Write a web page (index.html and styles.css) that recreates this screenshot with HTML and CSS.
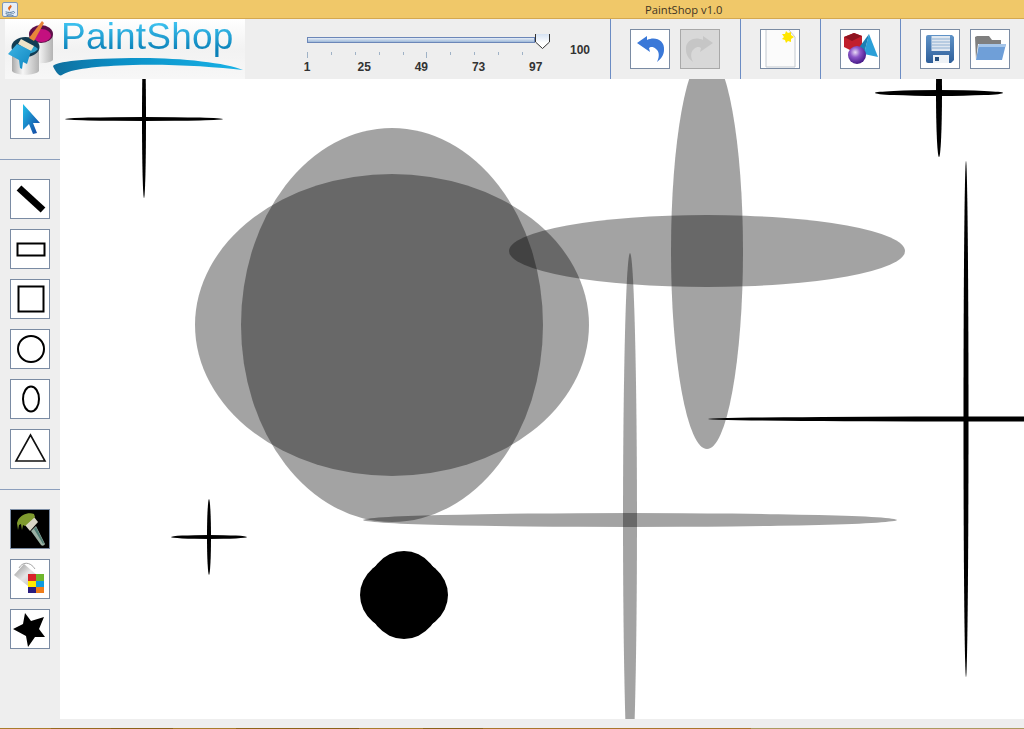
FILE: index.html
```html
<!DOCTYPE html>
<html lang="en">
<head>
  <meta charset="UTF-8">
  <meta name="viewport" content="width=device-width, initial-scale=1.0">
  <title>PaintShop v1.0</title>
  <link rel="stylesheet" href="styles.css">
</head>
<body>
  <header class="titlebar">
    <span class="app-icon">
      <svg width="16" height="15" viewBox="0 0 16 15">
        <path d="M9 1C7 3 5 4 6 6l2 2C7 6 9 5 10 3z" fill="#e0641e"/>
        <path d="M3 9c3 1 6 1 8 0M3 11c3 1 6 1 8 0M4 13c2 1 6 1 8 0M11 9c2-1 3 1 1 2" fill="none" stroke="#3f6a94" stroke-width="1"/>
      </svg>
    </span>
    <span class="title-text">PaintShop v1.0</span>
  </header>

  <div class="toolbar">
    <div class="logo">
      <svg class="logo-can" width="56" height="60" viewBox="0 0 56 60">
        <defs>
          <linearGradient id="canSide" x1="0" x2="1" y1="0" y2="0">
            <stop offset="0" stop-color="#a9a9a9"/>
            <stop offset=".4" stop-color="#f6f6f6"/>
            <stop offset="1" stop-color="#b3b3b3"/>
          </linearGradient>
          <linearGradient id="bristle" x1="0" x2="1" y1="0" y2="1">
            <stop offset="0" stop-color="#3fb4e4"/>
            <stop offset="1" stop-color="#0f86c0"/>
          </linearGradient>
        </defs>
        <path d="M24 15h24v26c-3 4-20 4-24 2z" fill="url(#canSide)"/>
        <ellipse cx="36" cy="15" rx="12" ry="9" fill="#5f0f4a"/>
        <ellipse cx="36.500" cy="16.500" rx="9.500" ry="6.500" fill="#c4107f"/>
        <path d="M7 28h27v24c-4 5-23 5-27 0z" fill="url(#canSide)"/>
        <ellipse cx="20.500" cy="28" rx="14" ry="10" fill="#123c52"/>
        <path d="M9 30c6-6 19-6 24 0-4 6-20 7-24 0z" fill="#2e9fc8"/>
        <path d="M37 2l2 2-10 18-5-3z" fill="#e8853a"/>
        <path d="M16 20l13 7-3 5-13-7z" fill="#efe3c8"/>
        <path d="M12 25l14 7-4 13-4-2-1 7-2-1-1-8-11-6z" fill="url(#bristle)"/>
      </svg>
      <div class="logo-mark">
        <span class="logo-text">PaintShop</span>
        <svg class="logo-swoosh" width="192" height="20" viewBox="0 0 192 20">
          <defs>
            <linearGradient id="swoosh" x1="0" x2="1" y1="0" y2="0">
              <stop offset="0" stop-color="#0f6f9e"/>
              <stop offset=".35" stop-color="#0b8fc6"/>
              <stop offset="1" stop-color="#18b2e6"/>
            </linearGradient>
          </defs>
          <path d="M1 9C4 5 30 1 90 1c40 0 85 5 101 12-28-3-70-6-110-5C45 9 18 12 10 18 7 20 3 14 1 9z" fill="url(#swoosh)"/>
        </svg>
      </div>
    </div>

    <div class="slider-box">
      <div class="slider">
        <div class="slider-track"></div>
        <svg class="slider-thumb" width="15" height="15" viewBox="0 0 15 15">
          <defs>
            <linearGradient id="thumb" x1="0" x2="0" y1="0" y2="1">
              <stop offset="0" stop-color="#d5e2f3"/>
              <stop offset=".6" stop-color="#ffffff"/>
            </linearGradient>
          </defs>
          <path d="M.5 0v8l7 6.500 7-6.500V0" fill="url(#thumb)" stroke="#333" stroke-width="1"/>
        </svg>
      </div>
      <div class="ticks">
        <i class="tick long"></i><i class="tick"></i><i class="tick"></i><i class="tick"></i><i class="tick"></i>
        <i class="tick long"></i><i class="tick"></i><i class="tick"></i><i class="tick"></i><i class="tick"></i>
      </div>
      <div class="tick-labels">
        <span>1</span><span>25</span><span>49</span><span>73</span><span>97</span>
      </div>
    </div>
    <span class="slider-value">100</span>

    <div class="tool-group">
      <button class="tool">
        <svg width="38" height="38" viewBox="0 0 38 38">
          <path d="M6 13l10-7v4c8-4 18 0 17 10 0 5-3 9-7 12 3-6 2-11-1-13-3-3-6-2-7-1l1 4z" fill="#3a78d8"/>
        </svg>
      </button>
      <button class="tool disabled">
        <svg width="38" height="38" viewBox="0 0 38 38">
          <path d="M32 13l-10-7v4c-8-4-18 0-17 10 0 5 3 9 7 12-3-6-2-11 1-13 3-3 6-2 7-1l-1 4z" fill="#c6c6c6"/>
        </svg>
      </button>
    </div>
    <div class="tool-group">
      <button class="tool">
        <svg width="38" height="38" viewBox="0 0 38 38">
          <path d="M5 0h29v37H5z" fill="#fbfbfb"/>
          <path d="M5 0v37h29V7l-6-7" fill="none" stroke="#c2c8cf" stroke-width="1"/>
          <path d="M25 1l2 2 3-1 0 3 3 2-3 2 0 3-3-1-2 2-1-3-3-1 2-2-2-3 3 0z" fill="#ffe600"/>
        </svg>
      </button>
    </div>
    <div class="tool-group">
      <button class="tool">
        <svg width="38" height="38" viewBox="0 0 38 38">
          <defs>
            <radialGradient id="ball" cx=".4" cy=".35" r=".7">
              <stop offset="0" stop-color="#e9dcf5"/>
              <stop offset=".4" stop-color="#8d57c9"/>
              <stop offset="1" stop-color="#3c1180"/>
            </radialGradient>
          </defs>
          <path d="M3 7l10-4 8 3v12l-10 3-8-4z" fill="#c21f2c"/>
          <path d="M3 7l8 4 10-5-8-3z" fill="#8f1420"/>
          <path d="M28 4l9 23-14-3z" fill="#2a9fd8"/>
          <path d="M28 4l-5 20-6-5z" fill="#1b7fb4"/>
          <circle cx="16" cy="25" r="9" fill="url(#ball)"/>
        </svg>
      </button>
    </div>
    <div class="tool-group">
      <button class="tool">
        <svg width="38" height="38" viewBox="0 0 38 38">
          <defs>
            <linearGradient id="disk" x1="0" x2="0" y1="0" y2="1">
              <stop offset="0" stop-color="#5f93c8"/>
              <stop offset="1" stop-color="#2f5f9a"/>
            </linearGradient>
          </defs>
          <path d="M7 5h24l2 2v23l-3 3H7a2 2 0 01-2-2V7a2 2 0 012-2z" fill="url(#disk)"/>
          <path d="M10.500 6h18.500v15H10.500z" fill="#dfe7f0"/>
          <path d="M11 9h18M11 12h18M11 15h18M11 18h18" stroke="#8fb0d2" stroke-width="1"/>
          <path d="M12 25h16v8H12z" fill="#eef2f6"/>
          <path d="M14 27h4v4h-4z" fill="#27507f"/>
        </svg>
      </button>
      <button class="tool">
        <svg width="38" height="38" viewBox="0 0 38 38">
          <path d="M4 7l2-1h12l3 4h9v4H7l-2 16z" fill="#7f7f7f"/>
          <path d="M8 14h27l-4 16H5z" fill="#6f9fd8"/>
          <path d="M8 14h27l-1 3H7z" fill="#a6c6ea"/>
        </svg>
      </button>
    </div>
  </div>

  <div class="workspace">
    <aside class="sidebar">
      <div class="side-group top">
        <button class="tool">
          <svg width="38" height="38" viewBox="0 0 38 38">
            <defs>
              <linearGradient id="arrow" x1="0" x2="1" y1="0" y2="1">
                <stop offset="0" stop-color="#22c0ea"/>
                <stop offset="1" stop-color="#123f9e"/>
              </linearGradient>
            </defs>
            <path d="M12 4l17 19h-7l4 10-4 1-4-10-6 6z" fill="url(#arrow)"/>
          </svg>
        </button>
      </div>
      <div class="side-group">
        <button class="tool">
          <svg width="38" height="38" viewBox="0 0 38 38">
            <path d="M8 8l24 22" stroke="#000" stroke-width="7"/>
          </svg>
        </button>
        <button class="tool">
          <svg width="38" height="38" viewBox="0 0 38 38">
            <rect x="6.500" y="13.500" width="27" height="12" fill="none" stroke="#000" stroke-width="2"/>
          </svg>
        </button>
        <button class="tool">
          <svg width="38" height="38" viewBox="0 0 38 38">
            <rect x="7.500" y="6.500" width="25" height="25" fill="none" stroke="#000" stroke-width="2"/>
          </svg>
        </button>
        <button class="tool">
          <svg width="38" height="38" viewBox="0 0 38 38">
            <circle cx="20" cy="19" r="13" fill="none" stroke="#000" stroke-width="2"/>
          </svg>
        </button>
        <button class="tool">
          <svg width="38" height="38" viewBox="0 0 38 38">
            <ellipse cx="20" cy="19" rx="8" ry="12.500" fill="none" stroke="#000" stroke-width="2"/>
          </svg>
        </button>
        <button class="tool">
          <svg width="38" height="38" viewBox="0 0 38 38">
            <path d="M19.500 5L34 31H5z" fill="none" stroke="#111" stroke-width="1.600"/>
          </svg>
        </button>
      </div>
      <div class="side-group last">
        <button class="tool dark">
          <svg width="38" height="38" viewBox="0 0 38 38">
            <path d="M20 21l5-5 9 18c-1 2-3 2-4 1z" fill="#9ab0a4"/>
            <path d="M23 19l2-2 8 16-1 1z" fill="#4f7d74"/>
            <path d="M14 15l9-8 4 5-8 9z" fill="#d9d6c6"/>
            <path d="M7 10c3-5 10-8 16-6l1 3-10 9-2-1-1 5-1-6-2 1-1 5-1-7z" fill="#7f9a2e"/>
          </svg>
        </button>
        <button class="tool">
          <svg width="38" height="38" viewBox="0 0 38 38">
            <defs>
              <linearGradient id="pail" x1="0" x2="1" y1="0" y2="1">
                <stop offset="0" stop-color="#8f8f8f"/>
                <stop offset=".5" stop-color="#e6e6e6"/>
                <stop offset="1" stop-color="#b8b8b8"/>
              </linearGradient>
            </defs>
            <path d="M3 15L13 4l14 12-10 10z" fill="url(#pail)"/>
            <path d="M8 8c3-6 11-7 16 1" fill="none" stroke="#a8a8a8" stroke-width="1"/>
            <rect x="17" y="14" width="8" height="7" fill="#d8232a"/>
            <rect x="25" y="14" width="8" height="7" fill="#6fb62c"/>
            <rect x="17" y="21" width="8" height="6" fill="#ffe800"/>
            <rect x="25" y="21" width="8" height="6" fill="#0d9be0"/>
            <rect x="17" y="27" width="8" height="6" fill="#2a1c7e"/>
            <rect x="25" y="27" width="8" height="6" fill="#ee7d1a"/>
          </svg>
        </button>
        <button class="tool">
          <svg width="38" height="38" viewBox="0 0 38 38">
            <path d="M14 3l6 8 13-4-5 12 6 8H24l-7 10-2-11-13-7 10-5z" fill="#000"/>
          </svg>
        </button>
      </div>
    </aside>

    <main class="canvas">
      <svg class="drawing" width="964" height="640" viewBox="60 79 964 640">
        <g fill="#000">
          <ellipse cx="144" cy="119" rx="79" ry="2"/>
          <ellipse cx="144" cy="119" rx="2" ry="79"/>
          <ellipse cx="939" cy="93" rx="64" ry="3"/>
          <ellipse cx="939" cy="93" rx="3" ry="64"/>
          <ellipse cx="966" cy="419" rx="258" ry="2.500"/>
          <ellipse cx="966" cy="419" rx="2.500" ry="258"/>
          <ellipse cx="209" cy="537" rx="38" ry="2"/>
          <ellipse cx="209" cy="537" rx="2" ry="38"/>
          <ellipse cx="404" cy="595" rx="44" ry="38"/>
          <ellipse cx="404" cy="595" rx="38" ry="44"/>
        </g>
        <g fill="#000" fill-opacity=".36">
          <ellipse cx="392" cy="325" rx="197" ry="151"/>
          <ellipse cx="392" cy="325" rx="151" ry="197"/>
          <ellipse cx="707" cy="251" rx="198" ry="36"/>
          <ellipse cx="707" cy="251" rx="36" ry="198"/>
          <ellipse cx="630" cy="520" rx="267" ry="7"/>
          <ellipse cx="630" cy="520" rx="7" ry="267"/>
        </g>
      </svg>
    </main>
  </div>

  <div class="status-strip"></div>
  <div class="taskbar-edge"></div>
</body>
</html>
```

FILE: styles.css
```css
html, body {
  height: 100%;
}

body {
  margin: 0;
  height: 729px;
  overflow: hidden;
  display: flex;
  flex-direction: column;
  font-family: "Liberation Sans", Arial, sans-serif;
  background-color: #eeeeee;
}

.titlebar {
  height: 18px;
  display: flex;
  align-items: center;
  background-color: #f0c869;
  border-bottom: 1px solid #d4a850;
}

.app-icon {
  width: 16px;
  height: 15px;
  margin-left: 2px;
  background-color: #e8eef7;
  border: 1px solid #7f97b8;
  border-radius: 2px;
  box-sizing: border-box;
  overflow: hidden;
  display: flex;
}

.title-text {
  margin-left: 627px;
  font-family: "Open Sans", "Noto Sans", sans-serif;
  font-size: 11.200px;
  color: #3f3424;
}

.toolbar {
  height: 60px;
  display: flex;
  background-color: #eeeeee;
}

.logo {
  flex: none;
  width: 240px;
  margin-left: 5px;
  display: flex;
  background: linear-gradient(#ffffff, #f2f2f2 50%, #f7f7f7);
}

.logo-can {
  flex: none;
}

.logo-mark {
  display: flex;
  flex-direction: column;
}

.logo-text {
  height: 44px;
  margin: -4px 0 -2px;
  font-size: 37px;
  line-height: 44px;
  letter-spacing: .2px;
  background: linear-gradient(#3cc0ee 20%, #0a80b8 80%);
  -webkit-background-clip: text;
  background-clip: text;
  color: transparent;
}

.logo-swoosh {
  flex: none;
  margin-left: -9px;
}

.slider-box {
  flex: none;
  width: 250px;
  margin-left: 62px;
  padding-top: 15px;
}

.slider {
  display: flex;
  align-items: flex-start;
  height: 15px;
}

.slider-track {
  width: 226px;
  height: 4px;
  margin-top: 3px;
  background: linear-gradient(#e6edf7, #9db8d8);
  border: 1px solid #6b86b8;
}

.slider-thumb {
  flex: none;
}

.ticks {
  display: flex;
  gap: 22.900px;
  height: 6px;
  margin-top: 3px;
}

.tick {
  width: 1px;
  height: 3px;
  background-color: #9fb2c6;
}

.tick.long {
  height: 6px;
}

.tick-labels {
  display: flex;
  gap: 17.200px;
  margin: 2px 0 0 -20px;
}

.tick-labels span {
  width: 40px;
  text-align: center;
  font-size: 12px;
  font-weight: bold;
  color: #333333;
}

.slider-value {
  flex: none;
  width: 40px;
  margin-left: 13px;
  padding-top: 24px;
  font-size: 12px;
  font-weight: bold;
  color: #333333;
}

.tool-group {
  flex: none;
  display: flex;
  gap: 10px;
  padding: 10px 20px 0 19px;
  border-left: 1px solid #6b8cc4;
}

.tool {
  width: 40px;
  height: 40px;
  padding: 0;
  display: flex;
  align-items: center;
  justify-content: center;
  background-color: #ffffff;
  border: 1px solid #7a8ba3;
  box-sizing: border-box;
}

.tool.disabled {
  background-color: #d8d8d8;
  border-color: #a8a8a8;
}

.tool.dark {
  background-color: #000000;
}

.workspace {
  height: 640px;
  display: flex;
}

.sidebar {
  width: 60px;
  flex: none;
}

.side-group {
  display: flex;
  flex-direction: column;
  align-items: center;
  gap: 10px;
  padding: 19px 0 20px;
  border-bottom: 1px solid #8c9fbd;
}

.side-group.top {
  padding-top: 20px;
}

.side-group.last {
  border-bottom: none;
}

.canvas {
  flex: 1;
  background-color: #ffffff;
  overflow: hidden;
}

.drawing {
  display: block;
}

.status-strip {
  height: 9px;
  background-color: #eeeeee;
}

.taskbar-edge {
  height: 1px;
  background: linear-gradient(90deg, #a87c2a 51px, #96691e 51px, #96691e 111px, #8a6118 111px, #8a6118 173px, #a87c2a 173px, #a87c2a 236px, #8f6418 236px, #8a6118 359px, #a87c2a 359px, #a87c2a 423px, #8a6118 423px, #8a6118 483px, #a9752a 483px, #a9752a 751px, #ab9a5f 751px);
}
```
